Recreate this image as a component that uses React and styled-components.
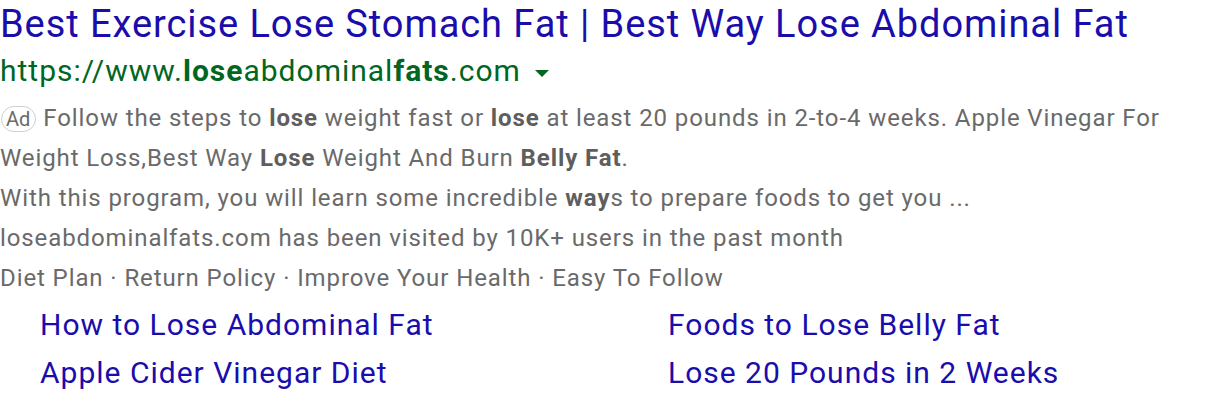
import React from "react";
import styled, { createGlobalStyle } from "styled-components";

const Global = createGlobalStyle`
  body {
    margin: 0;
    background: #fff;
    font-family: Roboto, "Liberation Sans", sans-serif;
  }
`;

const Result = styled.div`
  width: 1216px;
  height: 402px;
  overflow: hidden;
`;

const Title = styled.a`
  display: block;
  color: #1a0dab;
  font-size: 38px;
  letter-spacing: 0.93px;
  line-height: 48px;
  text-decoration: none;
`;

const Url = styled.div`
  display: flex;
  align-items: center;
  color: #006621;
  font-size: 30px;
  letter-spacing: 1px;
  line-height: 48px;
  margin-top: -1px;
  b {
    font-weight: 700;
  }
`;

const Caret = styled.span`
  display: inline-block;
  width: 0;
  height: 0;
  margin-left: 14px;
  margin-top: 4px;
  border-left: 7px solid transparent;
  border-right: 7px solid transparent;
  border-top: 7px solid #006621;
`;

const Body = styled.div`
  margin-top: 3px;
`;

const Desc = styled.div`
  color: #6a6a6a;
  font-size: 24px;
  letter-spacing: 0.9px;
  line-height: 40px;
  b {
    color: #5e5e5e;
    font-weight: 700;
  }
`;

const AdBadge = styled.span`
  display: inline-block;
  border: 1.5px solid #cfcfcf;
  border-radius: 13px;
  padding: 0 5px 0 4px;
  margin-left: 1px;
  font-size: 20px;
  letter-spacing: 0;
  line-height: 24px;
  color: #6a6a6a;
  margin-right: 7px;
  vertical-align: 0;
`;

const Sitelinks = styled.div`
  display: grid;
  grid-template-columns: 628px 1fr;
  padding-left: 40px;
  margin-top: 3px;
`;

const Sitelink = styled.a`
  color: #1a0dab;
  font-size: 30px;
  letter-spacing: 1px;
  line-height: 48px;
  text-decoration: none;
`;

export default function App() {
  return (
    <>
      <Global />
      <Result>
        <Title href="#">
          Best Exercise Lose Stomach Fat | Best Way Lose Abdominal Fat
        </Title>
        <Url>
          <span>
            https://www.<b>lose</b>abdominal<b>fats</b>.com
          </span>
          <Caret />
        </Url>
        <Body>
          <Desc>
            <AdBadge>Ad</AdBadge>Follow the steps to <b>lose</b> weight fast or{" "}
            <b>lose</b> at least 20 pounds in 2-to-4 weeks. Apple Vinegar For
            <br />
            Weight Loss,Best Way <b>Lose</b> Weight And Burn <b>Belly Fat</b>.
          </Desc>
          <Desc>
            With this program, you will learn some incredible <b>way</b>s to
            prepare foods to get you ...
          </Desc>
          <Desc>loseabdominalfats.com has been visited by 10K+ users in the past month</Desc>
          <Desc>Diet Plan · Return Policy · Improve Your Health · Easy To Follow</Desc>
        </Body>
        <Sitelinks>
          <Sitelink href="#">How to Lose Abdominal Fat</Sitelink>
          <Sitelink href="#">Foods to Lose Belly Fat</Sitelink>
          <Sitelink href="#">Apple Cider Vinegar Diet</Sitelink>
          <Sitelink href="#">Lose 20 Pounds in 2 Weeks</Sitelink>
        </Sitelinks>
      </Result>
    </>
  );
}
